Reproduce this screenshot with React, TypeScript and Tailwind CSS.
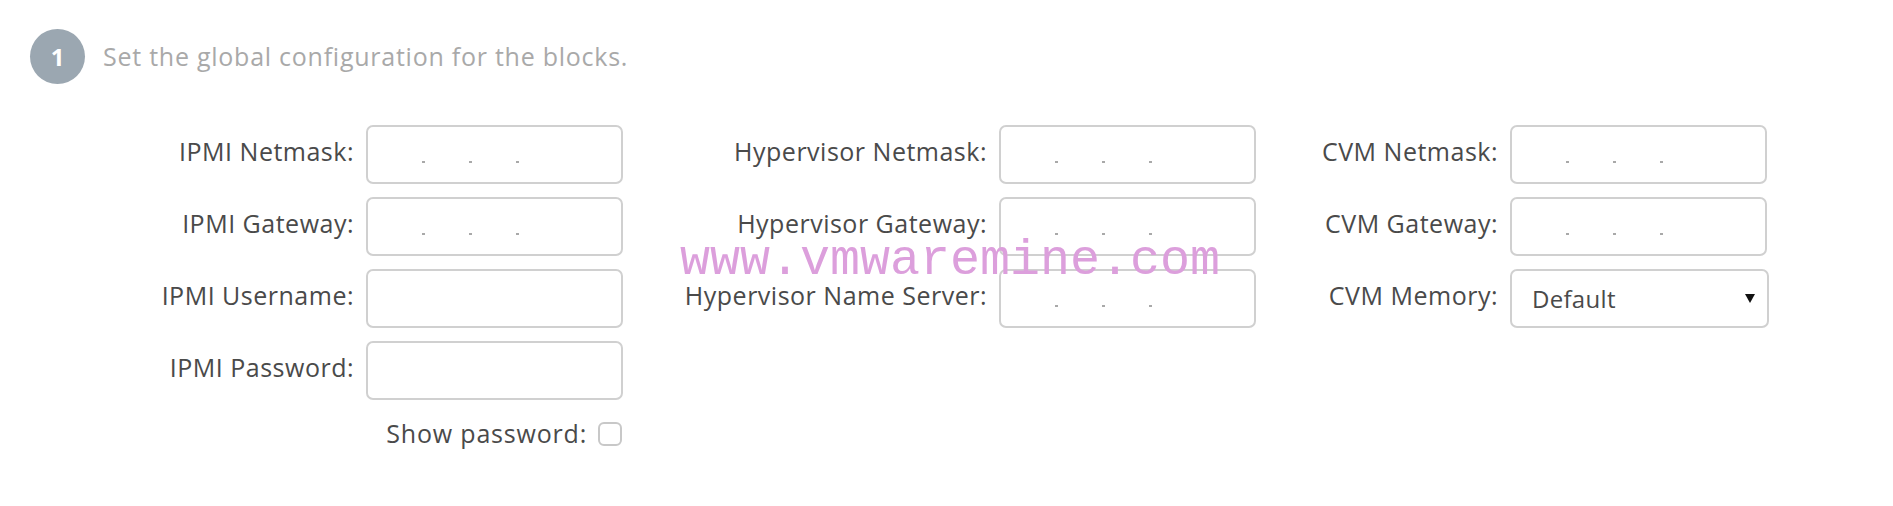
import React from "react";

const font = { fontFamily: '"Open Sans", "Liberation Sans", sans-serif' };

type Field = { label: string; kind: "ip" | "text" | "select" };

const col1: Field[] = [
  { label: "IPMI Netmask:", kind: "ip" },
  { label: "IPMI Gateway:", kind: "ip" },
  { label: "IPMI Username:", kind: "text" },
  { label: "IPMI Password:", kind: "text" },
];

const col2: Field[] = [
  { label: "Hypervisor Netmask:", kind: "ip" },
  { label: "Hypervisor Gateway:", kind: "ip" },
  { label: "Hypervisor Name Server:", kind: "ip" },
];

const col3: Field[] = [
  { label: "CVM Netmask:", kind: "ip" },
  { label: "CVM Gateway:", kind: "ip" },
  { label: "CVM Memory:", kind: "select" },
];

function IpInput() {
  return (
    <div className="flex h-[59px] w-[257px] items-center rounded-[7px] border-2 border-[#d0d0d0] bg-white pl-[54px]">
      <div className="mt-[15px] flex gap-[44px]">
        <span className="h-[2px] w-[3px] bg-[#a9a9a9]" />
        <span className="h-[2px] w-[3px] bg-[#a9a9a9]" />
        <span className="h-[2px] w-[3px] bg-[#a9a9a9]" />
      </div>
    </div>
  );
}

function TextInput() {
  return (
    <div className="h-[59px] w-[257px] rounded-[7px] border-2 border-[#d0d0d0] bg-white" />
  );
}

function SelectInput() {
  return (
    <div className="flex h-[59px] w-[259px] items-center justify-between rounded-[7px] border-2 border-[#d0d0d0] bg-white pl-[20px] pr-[12px]">
      <span className="text-[24px] tracking-[0.3px] text-[#4a4a4a]">Default</span>
      <svg width="10" height="9" viewBox="0 0 10 9">
        <path d="M0 0 H10 L5 9 Z" fill="#111" />
      </svg>
    </div>
  );
}

function Column({
  fields,
  labelWidth,
  className,
  children,
}: {
  fields: Field[];
  labelWidth: string;
  className?: string;
  children?: React.ReactNode;
}) {
  return (
    <div className={className}>
      <div className="flex flex-col gap-[13px]">
        {fields.map((f) => (
          <div key={f.label} className="flex items-center gap-3">
            <div
              className={`${labelWidth} whitespace-nowrap pb-[6px] text-right text-[25px] tracking-[0.5px] text-[#4a4a4a]`}
            >
              {f.label}
            </div>
            {f.kind === "ip" && <IpInput />}
            {f.kind === "text" && <TextInput />}
            {f.kind === "select" && <SelectInput />}
          </div>
        ))}
      </div>
      {children}
    </div>
  );
}

export default function App() {
  return (
    <div className="relative h-[506px] w-full overflow-hidden bg-white" style={font}>
      <div className="flex items-center pl-[30px] pt-[29px]">
        <div className="flex h-[55px] w-[55px] items-center justify-center rounded-full bg-[#9ba7b1] text-[24px] font-bold text-white">
          1
        </div>
        <div className="ml-[18px] text-[25px] tracking-[0.75px] text-[#a9a9a9]">
          Set the global configuration for the blocks.
        </div>
      </div>

      <div className="mt-[41px] flex items-start">
        <Column fields={col1} labelWidth="w-[254px]" className="ml-[100px]">
          <div className="mt-[15px] flex items-center justify-end gap-[11px] pr-px">
            <span className="text-[25px] tracking-[0.8px] text-[#4a4a4a]">Show password:</span>
            <span className="h-[24px] w-[24px] rounded-[6px] border-2 border-[#c8c8c8] bg-white" />
          </div>
        </Column>
        <Column fields={col2} labelWidth="w-[340px]" className="ml-[24px]" />
        <Column fields={col3} labelWidth="w-[230px]" className="ml-[12px]" />
      </div>

      <div
        className="pointer-events-none absolute left-[680px] top-[236px] text-[50px] leading-[50px] text-[#dc9fdc]"
        style={{ fontFamily: '"Liberation Mono", monospace' }}
      >
        www.vmwaremine.com
      </div>
    </div>
  );
}
